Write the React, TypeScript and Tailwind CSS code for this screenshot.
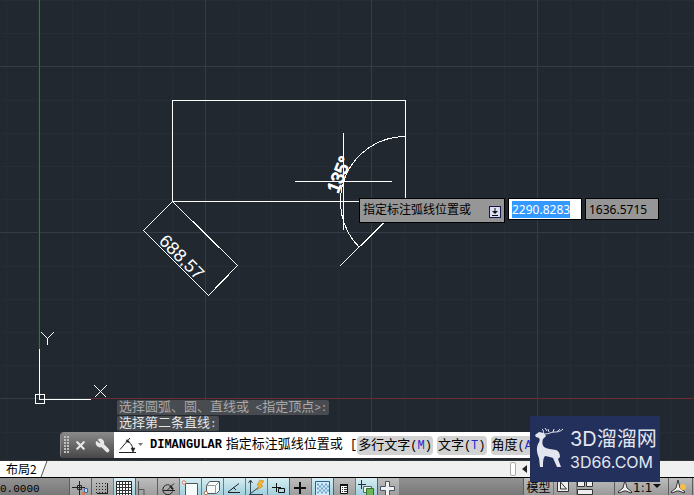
import { useEffect, useRef } from 'react';
import type { ReactNode } from 'react';
import { Wrench, X } from 'lucide-react';

const MINOR_LINES = Array.from({ length: 60 }, (_, i) => Math.round(39 + (i - 1) * 33.2)).filter(x => x !== 39);
const MINOR_ROWS = Array.from({ length: 60 }, (_, i) => Math.round(33.2 * i));

interface Tool {
  name: string;
  active: boolean;
  icon: ReactNode;
}

const dots = [4, 7, 10, 13];

const TOOLS: Tool[] = [
  {
    name: 'Infer constraints',
    active: false,
    icon: (
      <>
        <path d="M9.5 3v14M2 9.500h13" stroke="#222" />
        <path d="M7.500 7.500h4v4h-4z" stroke="#222" />
        <path d="M14.500 10.500h3v4h-3z" fill="#cde" stroke="#36a" />
        <path d="M12.500 14.500h2v2h-2z" stroke="#c74" />
      </>
    ),
  },
  {
    name: 'Snap',
    active: false,
    icon: (
      <>
        {dots.map(y => dots.map(x => <path key={`${x}-${y}`} d={`M${x} ${y + 1.5}h1`} stroke="#222" />))}
        <path d="M15.500 5v11M5 15.500h11" stroke="#222" />
      </>
    ),
  },
  {
    name: 'Grid',
    active: true,
    icon: (
      <>
        <path d="M2.500 3.500h15v16h-15z" fill="#fff" stroke="#222" />
        <path d="M5.500 3v16M8.500 3v16M11.500 3v16M14.500 3v16M2 6.500h16M2 9.500h16M2 12.500h16M2 15.500h16" stroke="#333" />
      </>
    ),
  },
  { name: 'Ortho', active: false, icon: <path d="M2.500 3v15M2 11.500h6v7" stroke="#555" /> },
  {
    name: 'Polar',
    active: false,
    icon: (
      <>
        <path d="M14.500 13.500a5 5 0 1 1-3-6.500M5 12.500h12M9 12.500l7-7" stroke="#222" />
        <path d="M12 7.500l3 4" stroke="#222" strokeWidth="2" />
      </>
    ),
  },
  {
    name: 'Object snap',
    active: true,
    icon: (
      <>
        <path d="M5.500 5.500h12v14h-12z" fill="#f5fafb" stroke="#555" />
        <circle cx="4" cy="4.500" r="1.700" fill="#fff" stroke="#c75" />
      </>
    ),
  },
  {
    name: '3D object snap',
    active: true,
    icon: (
      <>
        <path d="M4.500 7.500l3-4h10v9l-3 3h-10z" fill="#f5fafb" stroke="#555" />
        <path d="M4.500 7.500h9l4-4M13.500 7.500v8" stroke="#999" />
        <circle cx="4" cy="15" r="1.700" fill="#fff" stroke="#c75" />
      </>
    ),
  },
  { name: 'Object snap tracking', active: true, icon: <path d="M4 14.500h12M4 14L15 5.500M9 9l3 3" stroke="#222" /> },
  {
    name: 'Dynamic UCS',
    active: true,
    icon: (
      <>
        <path d="M4.500 3v14M3 16.500h14M4 16l9-7M2.500 5l2-3 2 3" stroke="#345" />
        <path d="M14 2l4 1-3 4 2 1-6 4 2-4-2-1z" fill="#f8b22d" stroke="#b87820" strokeWidth=".5" />
      </>
    ),
  },
  { name: 'Dynamic input', active: true, icon: <path d="M4 9.500h9M8.500 5v9M10.500 10.500h6v4h-6z" stroke="#111" /> },
  { name: 'Lineweight', active: false, icon: <path d="M4 10h6M10 4v12M10 10h6" stroke="#111" strokeWidth="2" /> },
  {
    name: 'Transparency',
    active: true,
    icon: (
      <>
        <path d="M3.500 3.500h14v14h-14z" fill="#d4ecfa" stroke="#246592" />
        <path d="M5 6.500h12M5 10.500h12M5 14.500h12" stroke="#70a8d0" strokeWidth="2" strokeDasharray="2 2" />
        <path d="M7 8.500h10M7 12.500h10" stroke="#70a8d0" strokeWidth="2" strokeDasharray="2 2" />
      </>
    ),
  },
  {
    name: 'Quick properties',
    active: false,
    icon: (
      <>
        <path d="M6.500 6.500h7v9h-7z" fill="#fff" stroke="#111" />
        <path d="M6 7h8" stroke="#111" strokeWidth="2" />
        <path d="M8 9.500h1M10 9.500h3M8 11.500h1M10 11.500h3M8 13.500h1M10 13.500h3" stroke="#333" />
      </>
    ),
  },
  {
    name: 'Selection cycling',
    active: true,
    icon: (
      <>
        <path d="M2 6.500h8M5.500 2v9" stroke="#234" />
        <path d="M7.500 8.500h8v6h-8z" fill="#e8f4e8" stroke="#567" />
        <path d="M10.500 10.500h7v8h-7z" fill="#70b458" stroke="#38702d" />
      </>
    ),
  },
  {
    name: 'Annotation monitor',
    active: false,
    icon: <path d="M7.500 3.500h4v5h5v4h-5v5h-4v-5h-5v-4h5z" fill="#f0f0f0" stroke="#456" />,
  },
];

function StatusButton({ tool }: { tool: Tool }) {
  return (
    <button
      aria-label={tool.name}
      className={
        tool.active
          ? 'h-5 w-[22px] shrink-0 border-l border-[#638088] bg-linear-to-b from-[#d8edf2] to-[#94cbd9]'
          : 'h-5 w-[22px] shrink-0 border-l border-[#5e5e5e] bg-linear-to-b from-[#bdbdbd] to-[#999999]'
      }
    >
      <svg width="21" height="20" fill="none">{tool.icon}</svg>
    </button>
  );
}

function Drawing() {
  return (
    <svg className="absolute inset-0 h-full w-full" fill="none" shapeRendering="crispEdges">
      <g fill="#262d36">
        {MINOR_LINES.map(x => <rect key={x} x={x} y="0" width="1" height="100%" />)}
        {MINOR_ROWS.map(y => <rect key={y} x="0" y={y} width="100%" height="1" />)}
      </g>
      <g fill="#343c47">
        {[205, 371, 537].map(x => <rect key={x} x={x} y="0" width="1" height="100%" />)}
        {[66, 232, 398].map(y => <rect key={y} x="0" y={y} width="100%" height="1" />)}
      </g>
      <rect x="39" y="0" width="1" height="350" fill="#22802f" />
      <rect x="38" y="0" width="1" height="350" fill="#1f3329" />
      <rect x="90" y="398" width="100%" height="1" fill="#6b2b32" />

      <g stroke="#fff">
        <path d="M172.500 100.500h233v101h-233z" />
        <path d="M172.500 201.500L143.500 230.500L208.500 295.500L237.500 265.500z" />
        <path d="M405.500 136.500A65 65 0 0 0 359.500 247.500" />
        <path d="M339.500 266.500L405.500 201.500" />
        <path d="M343.500 133v97M295 181.500h97" />
        <path d="M39.500 349v50h51M35.500 394.500h9v9h-9z" />
        <path d="M41.500 332.500l6 6 6-6M47.500 338.500v6M94.500 385.500l12 12M106.500 385.500l-12 12" />
      </g>
      <g fill="#fff" className="font-['Liberation_Sans',sans-serif]">
        <text transform="translate(158 242) rotate(45)" className="text-[18px]">688,57</text>
        <text transform="translate(338 194) rotate(-68)" className="text-[18px]" stroke="#fff">135°</text>
      </g>
    </svg>
  );
}

function DynamicInput() {
  const first = useRef<HTMLInputElement>(null);

  useEffect(() => {
    first.current?.focus();
    first.current?.select();
  }, []);

  return (
    <div className="absolute top-[198px] left-[359px] flex items-start gap-[3px] font-['Noto_Sans','Noto_Sans_CJK_SC',sans-serif] text-xs text-black">
      <div className="flex h-[25px] w-[146px] items-center justify-between border border-black bg-[#969696] px-[3px]">
        <label htmlFor="coord-x" className="pb-0.5 whitespace-nowrap">指定标注弧线位置或</label>
        <button aria-label="Options" className="mt-0.5 h-3 w-3 border border-[#181848] bg-[#dce0f4]">
          <svg width="10" height="10" fill="none">
            <path d="M5 1v5M2 8.500h6" stroke="#111" />
            <path d="M2 4h6l-3 3z" fill="#111" />
          </svg>
        </button>
      </div>
      <input
        ref={first}
        id="coord-x"
        defaultValue="2290.8283"
        className="h-[22px] w-[74px] border border-black bg-white px-[3px] outline-none selection:bg-[#3399ff] selection:text-white"
      />
      <input
        aria-label="Y"
        defaultValue="1636.5715"
        className="h-[22px] w-[74px] border border-black bg-[#969696] px-[3px] outline-none"
      />
    </div>
  );
}

function Option({ label, hotkey }: { label: string; hotkey: string }) {
  return (
    <button className="h-[19px] shrink-0 rounded-sm bg-[#d2d2d2] px-px">
      {label}
      <span className="text-xs">(<span className="text-[#2828d0]">{hotkey}</span>)</span>
    </button>
  );
}

function CommandLine() {
  return (
    <div className="absolute bottom-0.5 left-[60px] w-[540px] font-['Liberation_Mono','Noto_Sans_CJK_SC',monospace] text-[13px]">
      <div className="mb-px ml-[57px] flex flex-col items-start gap-px leading-[15px]">
        <p className="h-[15px] rounded-xs bg-[#484c51] px-0.5 text-[#a8a8a8]">
          选择圆弧、圆、直线或<span className="text-[11px]"> &lt;</span>指定顶点<span className="text-[11px]">&gt;:</span>
        </p>
        <p className="h-[15px] rounded-xs bg-[#484c51] px-0.5 text-[#e4e4e4]">
          选择第二条直线<span className="text-[11px]">:</span>
        </p>
      </div>
      <div className="flex h-[26px] overflow-hidden rounded-l-sm border-l border-[#888]">
        <div className="flex w-[53px] shrink-0 items-center bg-linear-to-b from-[#8b8b8b] to-[#484848] pl-[3px] text-[#e8e8e8]">
          <svg width="6" height="18" fill="none" stroke="#c0c0c0" strokeDasharray="2 1">
            <path d="M1 0v18M4 0v18" strokeWidth="2" />
          </svg>
          <button aria-label="Close" className="ml-1"><X size={13} strokeWidth={4} /></button>
          <button aria-label="Customize" className="ml-2"><Wrench size={15} strokeWidth={2} fill="currentColor" className="-scale-x-100" /></button>
        </div>
        <div className="flex grow items-center bg-white text-black">
          <button aria-label="Recent commands" className="shrink-0 pl-1">
            <svg width="28" height="20" fill="none" stroke="#222">
              <path d="M1 17.500h17M2 14.500L12 3M9 6.500c4 1 6 5 6 10" />
              <path d="M9 4.500l3 3-4-1zM13 13h4l-2 4z" fill="#222" strokeWidth=".5" />
              <path d="M20 8h5l-2.500 3z" fill="#777" stroke="none" />
            </svg>
          </button>
          <label htmlFor="command" className="ml-1 shrink-0 whitespace-nowrap">
            <b className="text-xs">DIMANGULAR</b> <span className="-ml-1">指定标注弧线位置或</span>
            <span className="text-xs"> [</span>
          </label>
          <div className="flex gap-1">
            <Option label="多行文字" hotkey="M" />
            <Option label="文字" hotkey="T" />
            <Option label="角度" hotkey="A" />
          </div>
          <input id="command" className="w-2 min-w-0 grow outline-none" />
        </div>
      </div>
    </div>
  );
}

function Watermark() {
  return (
    <div className="absolute bottom-[13px] left-[530px] flex h-[66px] w-[130px] items-center bg-[#24305c] text-[#e3e6ee]">
      <svg width="38" height="66" fill="none">
        <path
          d="M5 19l4-3 5 1 2 3-3 3c-1 3-1 6 1 8 3 2 8 2 12 3 3 1 4 4 4 7l-2 2 3 8h-4l-4-9c-3-1-6-2-8-2-2 2-2 7-2 11h-3l-1-9c-2-5-3-9-1-14 2-3 2-5 1-6l-3-1z"
          fill="currentColor"
        />
        <path
          d="M14 18c-1-2 0-4-2-5M17 15l-2-3M15 18c4 0 6-2 9-2s6 0 9-3M19 16l-1-3M23 16l1-3M27 16l3-3"
          stroke="currentColor"
        />
      </svg>
      <div className="flex flex-col gap-px pl-0.5 font-['Inter','Noto_Sans_CJK_SC',sans-serif] whitespace-nowrap">
        <p className="h-6 text-[20px] leading-6">3D溜溜网</p>
        <p className="h-5 text-base leading-5">3D66.COM</p>
      </div>
    </div>
  );
}

export default function App() {
  return (
    <div className="flex h-screen flex-col overflow-hidden bg-[#212830]">
      <main className="relative min-h-0 grow">
        <Drawing />
        <DynamicInput />
        <CommandLine />
      </main>

      <nav className="flex h-[17px] shrink-0 items-stretch border-t border-[#333] bg-[#f0f0f0] font-['Noto_Sans_CJK_SC',sans-serif] text-xs">
        <button className="bg-white pl-1.5 leading-4 whitespace-nowrap">布局2</button>
        <svg width="12" height="16" stroke="#555"><path d="M0 0h10L4 16H0z" fill="#fff" stroke="none" /><path d="M4 16L10 0" /></svg>
        <div className="ml-auto flex w-[184px] items-center gap-1.5">
          <span className="h-3.5 w-1.5 rounded-xs border border-[#aaa] bg-white" />
          <button aria-label="Scroll left"><svg width="5" height="8"><path d="M5 0v8L0 4z" fill="#222" /></svg></button>
        </div>
      </nav>

      <footer className="relative h-[18px] shrink-0 border-t border-black bg-linear-to-b from-[#929292] to-[#787878] font-['Noto_Sans_CJK_SC',sans-serif] text-xs text-black">
        <div className="flex h-[17px] overflow-hidden">
          <span className="h-[17px] w-[69px] shrink-0 pt-1 font-['Liberation_Mono',monospace] text-[11px] leading-[15px]">0.0000</span>
          {TOOLS.map(tool => <StatusButton key={tool.name} tool={tool} />)}
          <div className="ml-auto flex h-[17px] shrink-0 bg-linear-to-b from-[#bdbdbd] to-[#999999]">
            <button className="w-[30px] border-l border-[#5e5e5e] leading-[17px]">模型</button>
            <button aria-label="Model" className="w-[23px] border-l border-[#777]">
              <svg width="20" height="17" fill="none"><path d="M3.500 1.500h11v12h-11z" fill="#eee" stroke="#333" /><path d="M6.500 4v7h6z" stroke="#333" /></svg>
            </button>
            <button aria-label="Layout" className="w-[38px] border-l border-[#777]">
              <svg width="24" height="17" fill="none"><path d="M.5 0.500h7v8h-7zM9.500 .5h6v8h-6zM.5 11.500h15v5h-15z" fill="#eee" stroke="#333" /></svg>
            </button>
            <button className="flex w-[54px] items-start border-l border-[#5e5e5e] font-['DejaVu_Sans',sans-serif] leading-5">
              <svg width="18" height="17" fill="none"><path d="M10 2l2 8 5 4-1 1-5-2h-2l-5 2-1-1 5-4z" fill="#eee" stroke="#333" /></svg>
              <span className="whitespace-nowrap">1:1</span>
              <svg width="9" height="12" className="shrink-0"><path d="M1 6h8L5 10z" fill="#111" /></svg>
            </button>
            <button aria-label="Annotation visibility" className="w-[24px] border-l border-[#5e5e5e]">
              <svg width="21" height="17" fill="none"><path d="M9 2l2 8 5 4-1 1-5-2H8l-5 2-1-1 5-4z" fill="#eee" stroke="#333" /><circle cx="14" cy="9" r="3" fill="#f9bd42" /></svg>
            </button>
            <button aria-label="Auto scale" className="w-0.5 border-l border-[#5e5e5e]" />
          </div>
        </div>
        <Watermark />
      </footer>
    </div>
  );
}
